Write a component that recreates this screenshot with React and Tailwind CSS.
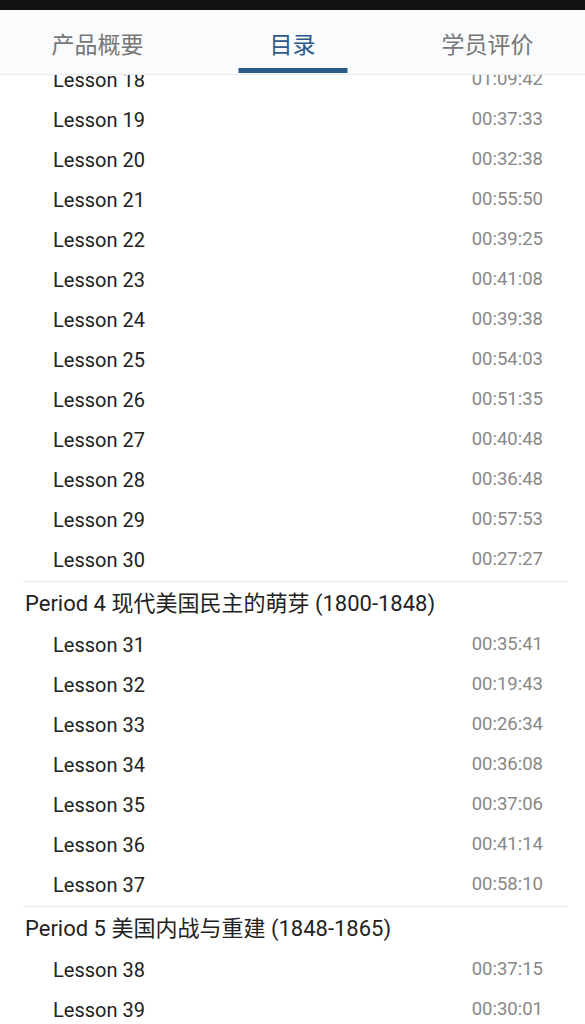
const font = { fontFamily: 'Roboto, "Noto Sans CJK SC", sans-serif' }

const SECTIONS = [
  {
    title: null,
    lessons: [
      [18, '01:09:42'], [19, '00:37:33'], [20, '00:32:38'], [21, '00:55:50'],
      [22, '00:39:25'], [23, '00:41:08'], [24, '00:39:38'], [25, '00:54:03'],
      [26, '00:51:35'], [27, '00:40:48'], [28, '00:36:48'], [29, '00:57:53'],
      [30, '00:27:27'],
    ],
  },
  {
    title: 'Period 4 现代美国民主的萌芽 (1800-1848)',
    lessons: [
      [31, '00:35:41'], [32, '00:19:43'], [33, '00:26:34'], [34, '00:36:08'],
      [35, '00:37:06'], [36, '00:41:14'], [37, '00:58:10'],
    ],
  },
  {
    title: 'Period 5 美国内战与重建 (1848-1865)',
    lessons: [[38, '00:37:15'], [39, '00:30:01']],
  },
]

function LessonRow({ n, time }) {
  return (
    <div className="h-[40px] flex items-center justify-between pl-[53px] pr-[42px]">
      <span className="text-[20px] text-[#222]">Lesson {n}</span>
      <span className="text-[18.5px] text-[#888]">{time}</span>
    </div>
  )
}

export default function App() {
  const tabs = ['产品概要', '目录', '学员评价']
  return (
    <div className="w-[585px] h-[1024px] overflow-hidden bg-white" style={font}>
      <div className="h-[10px] bg-[#121212]" />
      <div className="relative">
        <div className="pt-[50px]">
          {SECTIONS.map((s, i) => (
            <div key={i}>
              {i > 0 && (
                <>
                  <div className="mt-[1px] ml-[23px] mr-[17px] h-px bg-[#ececec]" />
                  <div className="h-[43px] flex items-center pl-[25px] text-[22px] text-[#222]">{s.title}</div>
                </>
              )}
              {s.lessons.map(([n, t]) => <LessonRow key={n} n={n} time={t} />)}
            </div>
          ))}
        </div>

        <div className="absolute top-0 left-0 right-0 h-[65px] bg-[#f9fbfd] border-b border-[#e6eaee] flex">
          {tabs.map((t, i) => (
            <div key={t} className="flex-1 relative flex items-center justify-center pt-[8px]">
              <span className={`text-[23px] ${i === 1 ? 'text-[#2d5a88]' : 'text-[#777]'}`}>{t}</span>
              {i === 1 && <div className="absolute bottom-[1px] left-1/2 -translate-x-1/2 w-[109px] h-[5px] bg-[#2b5987]" />}
            </div>
          ))}
        </div>
      </div>
    </div>
  )
}
